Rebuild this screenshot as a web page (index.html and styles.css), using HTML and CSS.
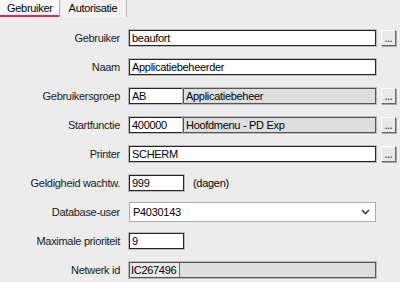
FILE: index.html
```html
<!DOCTYPE html>
<html lang="nl">
<head>
  <meta charset="UTF-8">
  <title>Gebruiker</title>
  <link rel="stylesheet" href="styles.css">
</head>
<body>
  <div class="tabs">
    <div class="tab active">Gebruiker</div>
    <div class="tab">Autorisatie</div>
  </div>

  <div class="form">
    <div class="label">Gebruiker</div>
    <div class="field">
      <span class="input wide">beaufort</span>
      <span class="lookup">...</span>
    </div>

    <div class="label">Naam</div>
    <div class="field">
      <span class="input wide">Applicatiebeheerder</span>
    </div>

    <div class="label">Gebruikersgroep</div>
    <div class="field">
      <span class="input short">AB</span>
      <span class="input rest disabled">Applicatiebeheer</span>
      <span class="lookup">...</span>
    </div>

    <div class="label">Startfunctie</div>
    <div class="field">
      <span class="input short">400000</span>
      <span class="input rest disabled">Hoofdmenu - PD Exp</span>
      <span class="lookup">...</span>
    </div>

    <div class="label">Printer</div>
    <div class="field">
      <span class="input wide">SCHERM</span>
      <span class="lookup">...</span>
    </div>

    <div class="label">Geldigheid wachtw.</div>
    <div class="field">
      <span class="input short">999</span>
      <span class="unit">(dagen)</span>
    </div>

    <div class="label">Database-user</div>
    <div class="field">
      <span class="select">
        P4030143
        <svg class="chevron" width="9" height="6" viewBox="0 0 9 6">
          <path d="M1 1l3.5 3.5L8 1" fill="none" stroke="#404040" stroke-width="1.6"/>
        </svg>
      </span>
    </div>

    <div class="label">Maximale prioriteit</div>
    <div class="field">
      <span class="input short">9</span>
    </div>

    <div class="label">Netwerk id</div>
    <div class="field">
      <span class="input wide disabled"><span class="marked">IC267496</span></span>
    </div>
  </div>
</body>
</html>
```

FILE: styles.css
```css
body {
  font-family: 'Liberation Sans', Arial, sans-serif;
  font-size: 11px;
  letter-spacing: -0.3px;
  background-color: #ececec;
  color: #000;
  margin: 0;
}

.tabs {
  display: flex;
  height: 17px;
}

.tab {
  display: flex;
  align-items: center;
  padding: 0 7px 1px 7px;
  border-right: 1px solid #b4b4b4;
  background-color: #f2f2f2;
}

.tab.active {
  background-color: #f9f9f9;
  padding: 0 6px 1px 7px;
  margin-right: 2px;
  box-shadow: inset 0 -2px 0 #e0245e;
}

.tab + .tab {
  padding-left: 7px;
  width: 50px;
}

.form {
  display: grid;
  grid-template-columns: 120px 1fr;
  grid-auto-rows: 29px;
  column-gap: 9px;
  align-items: center;
  padding-top: 6px;
}

.label {
  text-align: right;
  color: #1a1a1a;
}

.field {
  display: flex;
  align-items: center;
}

.input {
  box-sizing: border-box;
  height: 16px;
  display: flex;
  align-items: center;
  padding: 0 2px;
  background-color: #fff;
  border: 1px solid #262626;
  box-shadow: 0 0 0 1px #b9b9b9;
  white-space: nowrap;
  overflow: hidden;
}

.input.wide {
  width: 247px;
}

.input.short {
  width: 55px;
}

.input.rest {
  width: 193px;
  margin-left: -1px;
}

.input.disabled {
  background-color: #dedede;
  border-color: #555;
}

.marked {
  align-self: stretch;
  display: flex;
  align-items: center;
  margin-left: -2px;
  padding: 0 2px 0 1px;
  width: 46px;
  background-color: #e9e9e9;
  border-right: 1px solid #6e6e6e;
}

.lookup {
  box-sizing: border-box;
  width: 15px;
  height: 16px;
  margin-left: 5px;
  display: flex;
  align-items: flex-end;
  justify-content: center;
  padding-bottom: 3px;
  font-size: 9px;
  font-weight: bold;
  line-height: 6px;
  letter-spacing: 0;
  color: #4a3a8c;
  background-color: #e9e9e9;
  border: 1px solid;
  border-color: #fff #6a6a6a #6a6a6a #fff;
  box-shadow: 1px 1px 0 #a8a8a8;
}

.unit {
  margin-left: 9px;
}

.select {
  box-sizing: border-box;
  width: 247px;
  height: 20px;
  display: flex;
  align-items: center;
  justify-content: space-between;
  padding: 0 5px 0 3px;
  background-color: #fff;
  border: 1px solid #aaa;
}

.chevron {
  display: block;
}
```
